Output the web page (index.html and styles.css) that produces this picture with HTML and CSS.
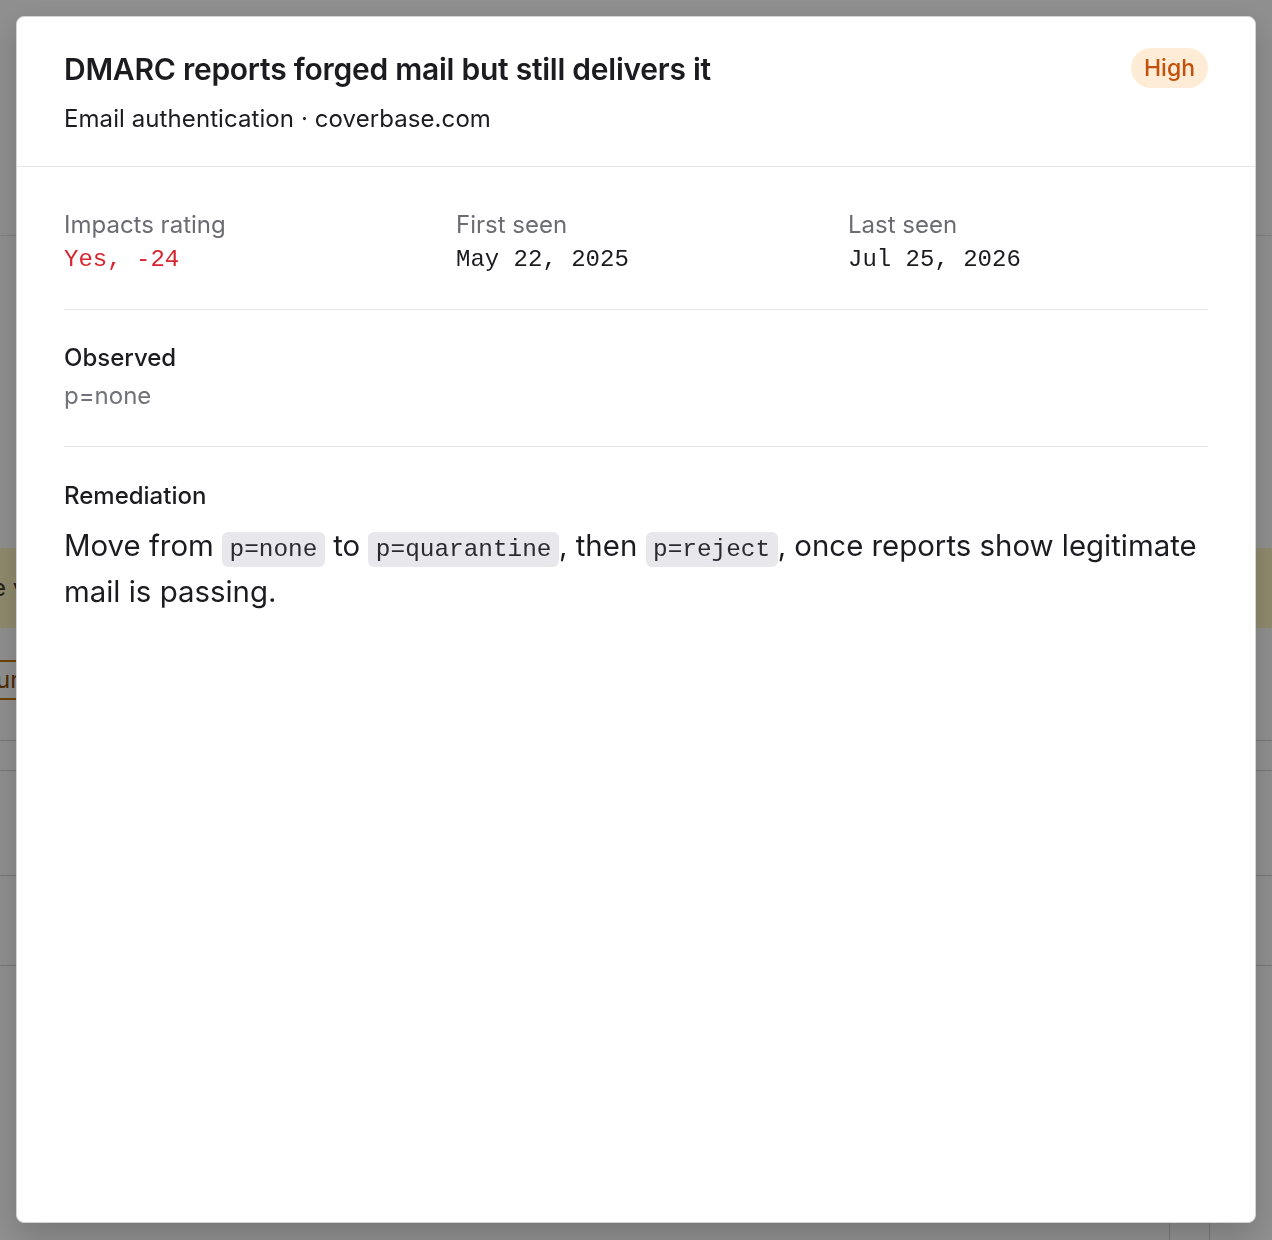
FILE: index.html
```html
<!DOCTYPE html>
<html lang="en">
<head>
<meta charset="utf-8">
<title>Finding detail</title>
<link rel="stylesheet" href="styles.css">
</head>
<body>
<div class="page">
  <header class="page-top"></header>
  <main class="page-main">
    <div class="notice">e verify the sender before acting on this report.</div>
    <div class="actions"><span class="outline-btn">urgent</span></div>
    <div class="table">
      <div class="row"></div>
      <div class="row tall"></div>
      <div class="row mid"></div>
      <div class="row cols"><span class="cell wide"></span><span class="cell"></span><span class="cell"></span></div>
    </div>
  </main>
</div>

<div class="overlay">
  <section class="modal" role="dialog" aria-labelledby="finding-title">
    <header class="modal-head">
      <div class="head-text">
        <h1 class="title" id="finding-title">DMARC reports forged mail but still delivers it</h1>
        <p class="subtitle">Email authentication · coverbase.com</p>
      </div>
      <span class="badge">High</span>
    </header>
    <div class="modal-body">
      <div class="facts">
        <div class="fact">
          <div class="fact-label">Impacts rating</div>
          <div class="fact-value danger">Yes, -24</div>
        </div>
        <div class="fact">
          <div class="fact-label">First seen</div>
          <div class="fact-value">May 22, 2025</div>
        </div>
        <div class="fact">
          <div class="fact-label">Last seen</div>
          <div class="fact-value">Jul 25, 2026</div>
        </div>
      </div>
      <div class="section observed">
        <h2 class="section-title">Observed</h2>
        <p class="observed-value">p=none</p>
      </div>
      <div class="section remediation">
        <h2 class="section-title">Remediation</h2>
        <p class="remediation-text">Move from <code class="chip">p=none</code> to <code class="chip">p=quarantine</code>, then <code class="chip">p=reject</code>, once reports show legitimate mail is passing.</p>
      </div>
    </div>
  </section>
</div>
</body>
</html>
```

FILE: styles.css
```css
* { box-sizing: border-box; }

html, body {
  margin: 0;
  height: 100%;
}

body {
  font-family: Inter, "Noto Sans", "Liberation Sans", sans-serif;
  color: #1c1c20;
  background: #ffffff;
  overflow: hidden;
}

/* ---------- underlying page (dimmed) ---------- */
.page {
  height: 100%;
  background: #ffffff;
}

.page-top {
  height: 236px;
  border-bottom: 1px solid #e4e4e7;
}

.page-main {
  padding-top: 312px;
}

.notice {
  height: 80px;
  background: #fff4c2;
  color: #3b3b2a;
  font-size: 24px;
  line-height: 80px;
  text-indent: -8px;
  white-space: nowrap;
  overflow: hidden;
}

.actions {
  padding-top: 32px;
}

.outline-btn {
  display: inline-block;
  height: 40px;
  width: 120px;
  margin-left: -22px;
  border: 2px solid #c2780c;
  border-radius: 6px;
  color: #8a4b06;
  font-size: 24px;
  line-height: 36px;
  padding-left: 16px;
}

.table {
  margin-top: 40px;
}

.row {
  height: 30px;
  border-top: 1px solid #d4d4d8;
}

.row.tall { height: 105px; }
.row.mid { height: 90px; }

.row.cols {
  height: 300px;
  display: grid;
  grid-template-columns: 1170px 40px 1fr;
}

.cell {
  border-right: 1px solid #d4d4d8;
}

.cell:last-child { border-right: none; }

/* ---------- overlay + modal ---------- */
.overlay {
  position: fixed;
  inset: 0;
  background: rgba(0, 0, 0, 0.44);
  padding: 16px 16px 17px 16px;
  display: flex;
}

.modal {
  flex: 1;
  display: flex;
  flex-direction: column;
  background: #ffffff;
  border: 1px solid #d4d4d8;
  border-radius: 8px;
  box-shadow: 0 12px 32px rgba(0, 0, 0, 0.18);
  overflow: hidden;
}

.modal-head {
  display: flex;
  justify-content: space-between;
  align-items: flex-start;
  gap: 24px;
  padding: 34px 47px 33px;
  border-bottom: 1px solid #e4e4e7;
}

.title {
  margin: 0;
  font-size: 30px;
  line-height: 36px;
  font-weight: 600;
  letter-spacing: -0.25px;
  color: #1c1c20;
}

.subtitle {
  margin: 18px 0 0;
  font-size: 24px;
  line-height: 28px;
  letter-spacing: 0.08px;
  color: #1c1c20;
}

.badge {
  margin-top: -3px;
  padding: 0 13px;
  height: 40px;
  line-height: 40px;
  border-radius: 20px;
  background: #feecd6;
  color: #c2510c;
  font-size: 23px;
  font-weight: 500;
}

.modal-body {
  padding: 0 47px;
}

.facts {
  display: grid;
  grid-template-columns: repeat(3, 1fr);
  column-gap: 32px;
  padding: 44px 0 33px;
  border-bottom: 1px solid #e4e4e7;
}

.fact-label {
  font-size: 24px;
  line-height: 28px;
  color: #6b6b74;
}

.fact-value {
  margin-top: 5px;
  font-family: "Liberation Mono", "DejaVu Sans Mono", monospace;
  font-size: 24px;
  line-height: 32px;
  color: #1c1c20;
}

.fact-value.danger {
  color: #d7262f;
}

.section {
  padding: 34px 0 36px;
  border-bottom: 1px solid #e4e4e7;
}

.section.remediation {
  border-bottom: none;
  padding-top: 35px;
}

.section-title {
  margin: 0;
  font-size: 24px;
  line-height: 28px;
  font-weight: 500;
  color: #1c1c20;
}

.observed-value {
  margin: 10px 0 0;
  font-size: 24px;
  line-height: 28px;
  color: #71717a;
}

.remediation-text {
  margin: 15px 0 0;
  font-size: 29.4px;
  line-height: 42px;
  color: #1c1c20;
}

.chip {
  font-family: "Liberation Mono", "DejaVu Sans Mono", monospace;
  font-size: 24.4px;
  padding: 4px 7.5px;
  border-radius: 6px;
  background: #e8e8ec;
  color: #2a2a30;
}
```
